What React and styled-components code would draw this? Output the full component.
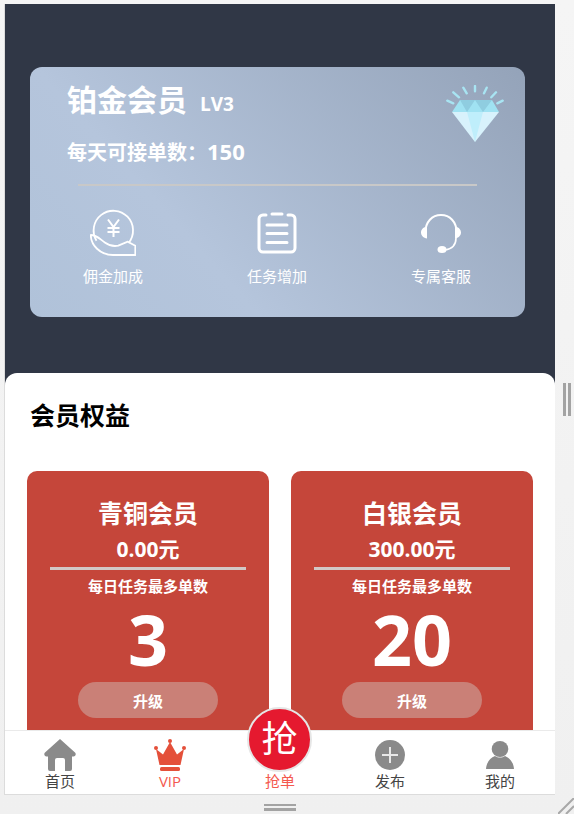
import styled, {createGlobalStyle} from 'styled-components'

const benefits = [
  {name: '青铜会员', price: '0.00元', count: '3'},
  {name: '白银会员', price: '300.00元', count: '20'},
]

const perks = [
  {label: '佣金加成', icon: <YuanIcon />},
  {label: '任务增加', icon: <TaskIcon />},
  {label: '专属客服', icon: <HeadsetIcon />},
]

const tabs = [
  {label: '首页', icon: <HomeIcon />},
  {label: 'VIP', icon: <CrownIcon />, active: true},
  {label: '抢单', active: true, grab: true},
  {label: '发布', icon: <PlusIcon />},
  {label: '我的', icon: <UserIcon />},
]

export default function App() {
  return (
    <Page>
      <GlobalStyle />
      <Phone>
        <Header>
          <VipCard>
            <CardTop>
              <div>
                <TitleRow>
                  <VipName>铂金会员</VipName>
                  <Level>LV3</Level>
                </TitleRow>
                <Quota>
                  每天可接单数：<QuotaNumber>150</QuotaNumber>
                </Quota>
              </div>
              <DiamondIcon />
            </CardTop>
            <CardRule />
            <Perks>
              {perks.map(perk => (
                <Perk key={perk.label}>
                  <PerkIcon>{perk.icon}</PerkIcon>
                  {perk.label}
                </Perk>
              ))}
            </Perks>
          </VipCard>
        </Header>
        <Sheet>
          <SheetTitle>会员权益</SheetTitle>
          <Plans>
            {benefits.map(plan => (
              <Plan key={plan.name}>
                <PlanName>{plan.name}</PlanName>
                <PlanPrice>{plan.price}</PlanPrice>
                <PlanRule />
                <PlanCaption>每日任务最多单数</PlanCaption>
                <PlanCount>{plan.count}</PlanCount>
                <UpgradeButton>升级</UpgradeButton>
              </Plan>
            ))}
          </Plans>
        </Sheet>
        <TabBar>
          {tabs.map(tab => (
            <Tab key={tab.label} $active={tab.active}>
              {tab.grab ? <GrabButton>抢</GrabButton> : <TabIcon>{tab.icon}</TabIcon>}
              <TabLabel>{tab.label}</TabLabel>
            </Tab>
          ))}
        </TabBar>
      </Phone>
      <SideHandle />
      <BottomHandle />
      <CornerHandle viewBox="0 0 16 16">
        <path d="M0 16 16 0M8 16l8-8" stroke="#a8a8a8" strokeWidth="2" fill="none" />
      </CornerHandle>
    </Page>
  )
}

function DiamondIcon() {
  return (
    <Diamond viewBox="0 0 60 60">
      <g stroke="#a8e4f2" strokeWidth="2.4" strokeLinecap="round">
        <path d="M2.3 15.7 8.3 18.3M8.3 7.3 14 12.3M18.3 2.7 21.7 8.3M30 1v5.3M41.7 2.7 39 8.3M51 7.3 46.3 12.3M57.7 15.7 52.3 18.3" />
      </g>
      <path d="M15 15h32l7 12H7z" fill="#a0e2f2" />
      <path d="M15 15h15l-8 12zM30 15h17l-9 12z" fill="#8fcde0" />
      <path d="M7 27h47L30 57z" fill="#d8f2fc" />
      <path d="M22 27h16L30 57z" fill="#bfeefb" />
    </Diamond>
  )
}

function YuanIcon() {
  return (
    <svg width="46" height="48" viewBox="0 0 46 48" fill="none" stroke="#fff" strokeWidth="1.8">
      <path d="M6.5 31.7A19.7 19.7 0 1 1 38.5 34" />
      <path d="M18 10.500l5.500 7.500 5.500-7.500M17.500 19h12M17.500 23h12M23.500 18v10" strokeWidth="2" />
      <path d="M.8 26c6 0 9 4 14 7.500 4 3 9 4 13.500 3.200l9.500-4 7.500 4V46H23C10 46 .8 36 .8 26z" strokeLinejoin="round" />
    </svg>
  )
}

function TaskIcon() {
  return (
    <svg width="40" height="42" viewBox="0 0 40 42" fill="none" stroke="#fff" strokeWidth="3" strokeLinecap="round">
      <path d="M9 3H6a4 4 0 0 0-4 4v29a4 4 0 0 0 4 4h28a4 4 0 0 0 4-4V7a4 4 0 0 0-4-4h-3" />
      <path d="M15 2h10M10 13h20M10 21.500h20M10 30.500h20" />
    </svg>
  )
}

function HeadsetIcon() {
  return (
    <svg width="40" height="41" viewBox="0 0 40 41">
      <path d="M4.500 19C4.500 9 11 2 20 2s15.500 7 15.500 17" fill="none" stroke="#fff" strokeWidth="2" />
      <path d="M6 13.500v12C2.500 25 0 22.500 0 19.500s2.500-5.500 6-6zM34 13.500v12c3.500-.5 6-3 6-6s-2.500-5.500-6-6z" fill="#fff" />
      <path d="M35 25c0 7-4.500 11-11 12" fill="none" stroke="#fff" strokeWidth="1.600" />
      <ellipse cx="21" cy="36.500" rx="4.500" ry="3.500" fill="#fff" />
    </svg>
  )
}

function HomeIcon() {
  return (
    <svg width="32" height="32" viewBox="0 0 32 32" fill="#8a8a8a">
      <path d="M16 0 31 13.500c1.500 1.500.5 4-1.500 4H28V30a2 2 0 0 1-2 2h-5V21a2 2 0 0 0-2-2h-6a2 2 0 0 0-2 2v11H6a2 2 0 0 1-2-2V17.500H2.500c-2 0-3-2.500-1.500-4z" />
    </svg>
  )
}

function CrownIcon() {
  return (
    <svg width="32" height="32" viewBox="0 0 32 32" fill="#e4503a">
      <circle cx="2" cy="9" r="2" />
      <circle cx="16" cy="2" r="2" />
      <circle cx="30" cy="9" r="2" />
      <path d="M2 10l7 5.500L16 3l7 12.500 7-5.500-3.500 16h-21z" />
      <rect x="6" y="28" width="20" height="4" rx="1.500" />
    </svg>
  )
}

function PlusIcon() {
  return (
    <svg width="30" height="30" viewBox="0 0 30 30">
      <circle cx="15" cy="15" r="15" fill="#8a8a8a" />
      <path d="M15 7v16M7 15h16" stroke="#e8e8e8" strokeWidth="2" />
    </svg>
  )
}

function UserIcon() {
  return (
    <svg width="28" height="28" viewBox="0 0 28 28" fill="#8a8a8a">
      <ellipse cx="14" cy="8" rx="8.300" ry="8" />
      <path d="M9 15c3 2 7 2 10 0 5 2 8.500 6.500 9 13H0c.5-6.500 4-11 9-13z" />
    </svg>
  )
}

const GlobalStyle = createGlobalStyle`
  html, body {
    margin: 0;
    padding: 0;
    height: 100%;
    overflow: hidden;
  }

  body {
    font-family: 'Open Sans', 'Noto Sans CJK SC', sans-serif;
  }
`

const Page = styled.div`
  position: relative;
  width: 574px;
  height: 814px;
  padding: 4px 0 0 4px;
  box-sizing: border-box;
  background: linear-gradient(#f5f5f5, #f0f0f0);
`

const Phone = styled.div`
  position: relative;
  width: 551px;
  height: 791px;
  box-sizing: border-box;
  border-left: 1px solid #dcdcdc;
  border-bottom: 1px solid #dcdcdc;
  background: #303746;
  overflow: hidden;
  display: flex;
  flex-direction: column;
`

const Header = styled.div`
  height: 369px;
  box-sizing: border-box;
  padding: 63px 30px 0 25px;
  flex-shrink: 0;
`

const VipCard = styled.div`
  height: 250px;
  box-sizing: border-box;
  padding: 14px 20px 0 37px;
  border-radius: 12px;
  color: #fff;
  background: linear-gradient(48deg, #b0c2d9 0%, #b5c5dc 32%, #94a3b9 100%);
`

const CardTop = styled.div`
  height: 103px;
  display: flex;
  justify-content: space-between;
`

const TitleRow = styled.div`
  display: flex;
  align-items: baseline;
  gap: 13px;
  height: 38px;
`

const VipName = styled.span`
  font-size: 30px;
  line-height: 38px;
  font-weight: 700;
`

const Level = styled.span`
  font-size: 19px;
  font-weight: 700;
`

const Quota = styled.div`
  margin-top: 17px;
  font-size: 20px;
  line-height: 30px;
  font-weight: 700;
`

const QuotaNumber = styled.span`
  font-size: 22px;
`

const Diamond = styled.svg`
  width: 60px;
  height: 60px;
  margin-top: 4px;
`

const CardRule = styled.div`
  height: 2px;
  width: 399px;
  margin-left: 11px;
  background: #c8c8c8;
`

const Perks = styled.div`
  display: grid;
  grid-template-columns: repeat(3, 164px);
  margin: 23px 0 0 -36px;
`

const Perk = styled.div`
  display: flex;
  flex-direction: column;
  align-items: center;
  font-size: 15px;
  line-height: 22px;
`

const PerkIcon = styled.div`
  height: 48px;
  display: flex;
  align-items: center;
  margin-bottom: 8px;
`

const Sheet = styled.div`
  flex: 1;
  min-height: 0;
  background: #fff;
  border-radius: 12px 12px 0 0;
  overflow: hidden;
`

const SheetTitle = styled.h2`
  margin: 0;
  padding: 24px 0 0 25px;
  font-size: 25px;
  line-height: 36px;
  font-weight: 700;
  color: #000;
`

const Plans = styled.div`
  display: grid;
  grid-template-columns: repeat(2, 242px);
  gap: 22px;
  padding: 38px 22px 0;
`

const Plan = styled.div`
  height: 330px;
  padding-top: 24px;
  box-sizing: border-box;
  border-radius: 10px;
  background: #c5463a;
  color: #fff;
  display: flex;
  flex-direction: column;
  align-items: center;
  font-weight: 700;
`

const PlanName = styled.div`
  font-size: 25px;
  line-height: 36px;
`

const PlanPrice = styled.div`
  font-size: 21px;
  line-height: 36px;
`

const PlanRule = styled.div`
  width: 196px;
  height: 3px;
  background: #d2c8c6;
`

const PlanCaption = styled.div`
  margin-top: 5px;
  font-size: 15px;
  line-height: 22px;
`

const PlanCount = styled.div`
  font-size: 70px;
  line-height: 84px;
`

const UpgradeButton = styled.button`
  width: 140px;
  height: 36px;
  margin-top: 1px;
  border: 0;
  border-radius: 18px;
  background: #ca8077;
  color: #fff;
  font-family: inherit;
  font-size: 15px;
  font-weight: 700;
`

const TabBar = styled.nav`
  position: absolute;
  left: 0;
  right: 0;
  bottom: 0;
  height: 64px;
  box-sizing: border-box;
  border-top: 1px solid #eaeaea;
  background: #fff;
  display: grid;
  grid-template-columns: repeat(5, 110px);
`

const Tab = styled.div`
  position: relative;
  display: flex;
  flex-direction: column;
  align-items: center;
  justify-content: flex-end;
  color: ${props => (props.$active ? '#f4594f' : '#444')};
`

const TabIcon = styled.div`
  height: 33px;
  display: flex;
  align-items: center;
`

const TabLabel = styled.div`
  font-size: 15px;
  line-height: 20px;
  margin-bottom: 3px;
`

const GrabButton = styled.div`
  position: absolute;
  top: -24px;
  left: 22px;
  width: 65px;
  height: 65px;
  box-sizing: border-box;
  border: 2px solid #e6e6e6;
  border-radius: 50%;
  background: #e5192f;
  color: #fff;
  font-size: 36px;
  line-height: 60px;
  text-align: center;
`

const SideHandle = styled.div`
  position: absolute;
  left: 563px;
  top: 383px;
  width: 2px;
  height: 33px;
  border-left: 3px solid #a3a3a3;
  border-right: 3px solid #a3a3a3;
`

const BottomHandle = styled.div`
  position: absolute;
  left: 264px;
  top: 804px;
  width: 32px;
  height: 2px;
  border-top: 2px solid #a3a3a3;
  border-bottom: 3px solid #a3a3a3;
`

const CornerHandle = styled.svg`
  position: absolute;
  right: 0;
  bottom: 0;
  width: 16px;
  height: 16px;
`
